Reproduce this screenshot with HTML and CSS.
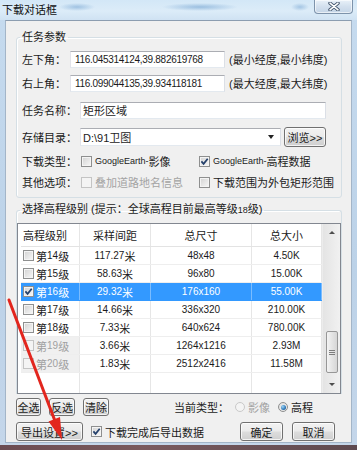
FILE: index.html
```html
<!DOCTYPE html>
<html>
<head>
<meta charset="utf-8">
<link rel="stylesheet" href="styles.css">
</head>
<body>
  <div class="window">
    <div class="titlebar">
      <span class="title">下载对话框</span>
      <div class="close-btn">
        <svg width="12" height="9" viewBox="0 0 12 9">
          <path class="x-outline" d="M2 1.2 L10 7.8 M10 1.2 L2 7.8"/>
          <path class="x-fill" d="M2 1.2 L10 7.8 M10 1.2 L2 7.8"/>
        </svg>
      </div>
    </div>

    <div class="client">
      <fieldset class="group task-group">
        <legend>任务参数</legend>
        <div class="row r1">
          <span class="lbl lbl-short">左下角：</span>
          <div class="textbox coord">116.045314124,39.882619768</div>
          <span class="note">(最小经度,最小纬度)</span>
        </div>
        <div class="row r2">
          <span class="lbl lbl-short">右上角：</span>
          <div class="textbox coord">116.099044135,39.934118181</div>
          <span class="note">(最大经度,最大纬度)</span>
        </div>
        <div class="row r3">
          <span class="lbl">任务名称：</span>
          <div class="textbox name">矩形区域</div>
        </div>
        <div class="row r4">
          <span class="lbl">存储目录：</span>
          <div class="textbox combo">D:\91卫图<span class="drop"></span></div>
          <div class="btn browse">浏览&gt;&gt;</div>
        </div>
        <div class="row r5">
          <span class="lbl">下载类型：</span>
          <span class="opt opt-left"><span class="chk"></span><span class="en">GoogleEarth-</span>影像</span>
          <span class="opt"><span class="chk"><svg class="tick" viewBox="0 0 9 9"><path d="M1.4 4.4 L3.6 6.9 L7.7 1.7"/></svg></span><span class="en">GoogleEarth-</span>高程数据</span>
        </div>
        <div class="row r6">
          <span class="lbl">其他选项：</span>
          <span class="opt opt-left disabled"><span class="chk"></span>叠加道路地名信息</span>
          <span class="opt"><span class="chk"></span>下载范围为外包矩形范围</span>
        </div>
      </fieldset>

      <fieldset class="group level-group">
        <legend>选择高程级别 (提示：全球高程目前最高等级<span class="en">18</span>级)</legend>
        <div class="list">
          <div class="grid">
            <div class="grid-row head">
              <div class="cell first">高程级别</div>
              <div class="cell">采样间距</div>
              <div class="cell">总尺寸</div>
              <div class="cell">总大小</div>
            </div>
            <div class="grid-row">
              <div class="cell first"><span class="chk"></span>第<span class="num">14</span>级</div>
              <div class="cell"><span class="num">117.27</span>米</div>
              <div class="cell num">48x48</div>
              <div class="cell num">4.50K</div>
            </div>
            <div class="grid-row">
              <div class="cell first"><span class="chk"></span>第<span class="num">15</span>级</div>
              <div class="cell"><span class="num">58.63</span>米</div>
              <div class="cell num">96x80</div>
              <div class="cell num">15.00K</div>
            </div>
            <div class="grid-row selected">
              <div class="cell first"><span class="chk"><svg class="tick" viewBox="0 0 9 9"><path d="M1.4 4.4 L3.6 6.9 L7.7 1.7"/></svg></span>第<span class="num">16</span>级</div>
              <div class="cell"><span class="num">29.32</span>米</div>
              <div class="cell num">176x160</div>
              <div class="cell num">55.00K</div>
            </div>
            <div class="grid-row">
              <div class="cell first"><span class="chk"></span>第<span class="num">17</span>级</div>
              <div class="cell"><span class="num">14.66</span>米</div>
              <div class="cell num">336x320</div>
              <div class="cell num">210.00K</div>
            </div>
            <div class="grid-row">
              <div class="cell first"><span class="chk"></span>第<span class="num">18</span>级</div>
              <div class="cell"><span class="num">7.33</span>米</div>
              <div class="cell num">640x624</div>
              <div class="cell num">780.00K</div>
            </div>
            <div class="grid-row off">
              <div class="cell first"><span class="chk"></span>第<span class="num">19</span>级</div>
              <div class="cell"><span class="num">3.66</span>米</div>
              <div class="cell num">1264x1216</div>
              <div class="cell num">2.93M</div>
            </div>
            <div class="grid-row off">
              <div class="cell first"><span class="chk"></span>第<span class="num">20</span>级</div>
              <div class="cell"><span class="num">1.83</span>米</div>
              <div class="cell num">2512x2416</div>
              <div class="cell num">11.58M</div>
            </div>
            <div class="grid-row filler">
              <div class="cell"></div><div class="cell"></div><div class="cell"></div><div class="cell"></div>
            </div>
          </div>
          <div class="vscroll">
            <div class="sb-btn"><span class="arrow-up"></span></div>
            <div class="sb-track"><div class="sb-thumb"><span class="grip"></span></div></div>
            <div class="sb-btn"><span class="arrow-down"></span></div>
          </div>
        </div>
      </fieldset>

      <div class="row actions">
        <div class="btn small">全选</div>
        <div class="btn small">反选</div>
        <div class="btn small">清除</div>
        <span class="cur-type">当前类型：</span>
        <span class="radio-opt disabled"><span class="radio"></span>影像</span>
        <span class="radio-opt"><span class="radio on"></span>高程</span>
      </div>

      <div class="row footer">
        <div class="btn export">导出设置&gt;&gt;</div>
        <span class="opt export-opt"><span class="chk"><svg class="tick" viewBox="0 0 9 9"><path d="M1.4 4.4 L3.6 6.9 L7.7 1.7"/></svg></span>下载完成后导出数据</span>
        <div class="btn ok">确定</div>
        <div class="btn cancel">取消</div>
      </div>
    </div>
  </div>

  <!-- 标注箭头 -->
  <svg class="annotation" width="357" height="450" viewBox="0 0 357 450">
    <line x1="9" y1="300" x2="55" y2="421"/>
    <polygon points="62,440 48.5,421.5 60,417"/>
  </svg>
</body>
</html>
```

FILE: styles.css
```css
* {
  box-sizing: border-box;
  margin: 0;
  padding: 0;
}
body {
  position: relative;
  width: 357px;
  height: 450px;
  overflow: hidden;
  background: linear-gradient(to right, #6b4c52, #7a5a5e 40%, #5e4a50);
  font-family: "Liberation Sans", "Noto Sans CJK SC", sans-serif;
  font-size: 11px;
  color: #1b1b1b;
}

/* 窗口外框 */
.window {
  display: flex;
  flex-direction: column;
  height: 445px;
  background: linear-gradient(to bottom, #c6dbef, #bcd2e8 60%, #c4d6ea);
}
.titlebar {
  position: relative;
  height: 20px;
  display: flex;
  align-items: center;
  padding-left: 2px;
  background:
    radial-gradient(ellipse 18px 4px at 77px 7px, rgba(128, 172, 214, .65), transparent),
    radial-gradient(ellipse 38px 4px at 200px 7px, rgba(128, 172, 214, .7), transparent),
    radial-gradient(ellipse 9px 4px at 300px 7px, rgba(128, 172, 214, .6), transparent),
    linear-gradient(to bottom, #d3e7f7, #dcecf8 55%, #cfe2f3);
}
.title {
  font-size: 11px;
  line-height: 13px;
  color: #111;
}
.close-btn {
  position: absolute;
  top: 0;
  right: 4px;
  width: 39px;
  height: 14px;
  display: flex;
  justify-content: center;
  align-items: center;
  border: 1px solid #7d93ab;
  border-top: none;
  border-radius: 0 0 4px 4px;
  background: linear-gradient(to bottom, #e9f1f9, #d3e0ee 50%, #c4d5e7);
  box-shadow: inset 0 0 0 1px rgba(255, 255, 255, .6);
}
.x-outline {
  stroke: #43566d;
  stroke-width: 3.4;
  stroke-linecap: round;
}
.x-fill {
  stroke: #ffffff;
  stroke-width: 1.6;
  stroke-linecap: round;
}

.client {
  flex: 1;
  margin: 0 5px 2px 5px;
  padding: 10px 9px 0 10px;
  background: #f0f0f0;
  border: 1px solid #a3b5c8;
  border-top-color: #8c9db0;
}

/* 分组框 */
.group {
  border: 1px solid #d5dfe5;
  border-radius: 3px;
  box-shadow: inset 1px 1px 0 #fff;
  min-inline-size: 0;
}
.group legend {
  line-height: 13px;
  padding: 0 2px;
}
.task-group {
  padding: 6px 5px 6px 5px;
}
.task-group legend {
  margin-left: -2px;
}
.level-group {
  margin-top: 5px;
  padding: 6px 0 0 0;
  border-bottom: none;
  border-radius: 3px 3px 0 0;
}
.level-group legend {
  margin-left: 3px;
}

.row {
  display: flex;
  align-items: center;
  height: 18px;
  white-space: nowrap;
}
.r2 { margin-top: 6px; }
.r3 { margin-top: 9px; }
.r4 { margin-top: 8px; height: 20px; }
.r5 { margin-top: 5px; }
.r6 { margin-top: 3px; }

.lbl {
  width: 58px;
  flex: none;
}
.lbl-short {
  width: 48px;
}
.note {
  margin-left: 4px;
}
.en {
  font-size: 9px;
}
.num {
  font-size: 10px;
}

.textbox {
  display: flex;
  align-items: center;
  height: 17px;
  padding: 0 2px;
  background: #fff;
  border: 1px solid;
  border-color: #abadb3 #dbdfe6 #e3e9ef #e2e3ea;
}
.coord {
  width: 155px;
  padding-left: 4px;
  font-size: 10px;
  letter-spacing: -0.3px;
}
.name {
  width: 246px;
}
.combo {
  width: 201px;
  height: 18px;
}
.drop {
  margin-left: auto;
  margin-right: 4px;
  border-left: 3px solid transparent;
  border-right: 3px solid transparent;
  border-top: 4px solid #222;
}

/* 按钮 */
.btn {
  display: flex;
  justify-content: center;
  align-items: center;
  height: 18px;
  border: 1px solid #707070;
  border-radius: 3px;
  background: linear-gradient(to bottom, #f2f2f2 0%, #ebebeb 48%, #dddddd 52%, #cfcfcf 100%);
  box-shadow: inset 0 0 0 1px rgba(255, 255, 255, .75);
  white-space: nowrap;
}
.browse {
  width: 42px;
  height: 20px;
  margin-left: 3px;
}

/* 复选框 */
.opt {
  display: flex;
  align-items: center;
}
.opt-left {
  width: 118px;
  margin-left: 1px;
}
.opt .chk {
  margin-right: 3px;
}
.chk {
  flex: none;
  display: flex;
  justify-content: center;
  align-items: center;
  width: 11px;
  height: 11px;
  border: 1px solid #8e8f8f;
  background: linear-gradient(135deg, #d2d2d2, #f8f8f8);
  box-shadow: inset 0 0 0 1px #f4f4f4;
}
.tick {
  width: 9px;
  height: 9px;
}
.tick path {
  fill: none;
  stroke: #24406b;
  stroke-width: 1.7;
}
.disabled {
  color: #a3a3a3;
}
.disabled .chk,
.off .chk {
  border-color: #c4c4c4;
  background: #f4f4f4;
}

/* 列表 */
.list {
  display: flex;
  height: 171px;
  border: 1px solid #828790;
  background: #fff;
}
.grid {
  flex: 1;
  display: flex;
  flex-direction: column;
  padding-left: 3px;
}
.grid-row {
  display: grid;
  grid-template-columns: 59px 71px 101px 70px;
  height: 18px;
  border-bottom: 1px solid #eeeeee;
}
.grid-row.head {
  height: 23px;
  border-bottom-color: #e3e3e3;
}
.grid-row.filler {
  flex: 1;
  border-bottom: none;
}
.cell {
  display: flex;
  justify-content: center;
  align-items: center;
  border-right: 1px solid #e6e6e6;
  white-space: nowrap;
}
.cell.first {
  justify-content: flex-start;
  padding-left: 2px;
}
.cell.first .chk {
  margin-right: 2px;
}
.selected {
  background: #3399ff;
  color: #fff;
  border-bottom-color: #3399ff;
}
.selected .cell {
  border-right-color: rgba(255, 255, 255, .35);
}
.off .cell.first {
  background: #f0f0f0;
  color: #a0a0a0;
}

/* 滚动条 */
.vscroll {
  width: 18px;
  display: flex;
  flex-direction: column;
  background: linear-gradient(to right, #e4e4e4, #f1f1f1);
  border-left: 1px solid #ececec;
}
.sb-btn {
  height: 17px;
  display: flex;
  justify-content: center;
  align-items: center;
}
.arrow-up {
  border-left: 3px solid transparent;
  border-right: 3px solid transparent;
  border-bottom: 3px solid #4d4d4d;
}
.arrow-down {
  border-left: 3px solid transparent;
  border-right: 3px solid transparent;
  border-top: 3px solid #4d4d4d;
}
.sb-track {
  flex: 1;
}
.sb-thumb {
  display: flex;
  justify-content: center;
  align-items: center;
  height: 42px;
  margin: 90px 2px 0 3px;
  border: 1px solid #979797;
  border-radius: 2px;
  background: linear-gradient(to right, #f4f4f4, #e4e4e4 50%, #d6d6d6);
}
.grip {
  width: 6px;
  height: 5px;
  background: repeating-linear-gradient(to bottom, #7d7d7d 0 1px, transparent 1px 2px);
}

/* 底部 */
.actions {
  margin-top: 4px;
}
.small {
  width: 26px;
  margin-right: 8px;
}
.small:first-child {
  width: 25px;
}
.cur-type {
  margin-left: 57px;
}
.radio-opt {
  display: flex;
  align-items: center;
  margin-left: 6px;
}
.radio-opt + .radio-opt {
  margin-left: 8px;
}
.radio {
  display: flex;
  justify-content: center;
  align-items: center;
  width: 10px;
  height: 10px;
  margin-right: 3px;
  border: 1px solid #8e8f8f;
  border-radius: 50%;
  background: radial-gradient(circle at 60% 60%, #f6f6f6, #d8d8d8);
}
.radio-opt.disabled .radio {
  border-color: #c9c9c9;
  background: #f4f4f4;
}
.radio.on::after {
  content: "";
  width: 5px;
  height: 5px;
  border-radius: 50%;
  background: radial-gradient(circle at 35% 35%, #9fd6f7, #2f78b8 60%, #17406c);
}

.footer {
  margin-top: 6px;
  height: 19px;
}
.footer .btn {
  height: 19px;
}
.export {
  width: 67px;
}
.export-opt {
  margin-left: 8px;
}
.ok {
  width: 43px;
  margin-left: auto;
}
.cancel {
  width: 43px;
  margin-left: 9px;
  margin-right: 7px;
}

/* 红色标注箭头 */
.annotation {
  position: absolute;
  top: 0;
  left: 0;
  pointer-events: none;
}
.annotation line {
  stroke: #e2261e;
  stroke-width: 3;
  stroke-linecap: round;
}
.annotation polygon {
  fill: #e2261e;
}
```
